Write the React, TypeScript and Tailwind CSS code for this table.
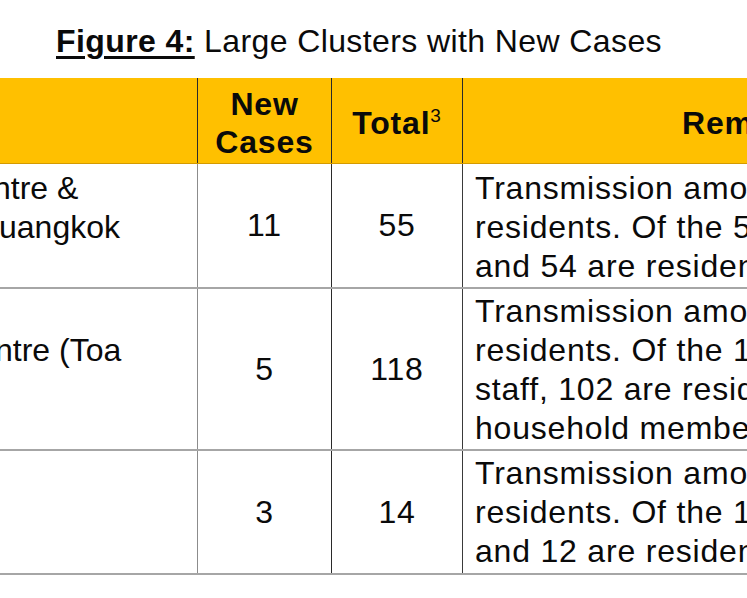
const font = { fontFamily: '"Liberation Sans", Arial, sans-serif' }

// first column is cut at the left edge of the crop, so each line sits a little off-screen
const rows = [
  {
    name: [
      { text: 'ntre &', cls: '-ml-[7px]' },
      { text: 'uangkok', cls: '-ml-[1px]' },
    ],
    newCases: '11',
    total: '55',
    remarks: [
      'Transmission among staff and',
      'residents. Of the 55 cases, 1 is staff',
      'and 54 are residents.',
    ],
    height: 'h-[125px]',
    pad: 'pt-[5px]',
  },
  {
    name: [
      { text: '\u00a0', cls: '' },
      { text: 'ntre (Toa', cls: '-ml-[5px]' },
    ],
    newCases: '5',
    total: '118',
    remarks: [
      'Transmission among staff and',
      'residents. Of the 118 cases, 14 are',
      'staff, 102 are residents and 2 are',
      'household members.',
    ],
    height: 'h-[162px]',
    pad: 'pt-[3px]',
  },
  {
    name: [],
    newCases: '3',
    total: '14',
    remarks: [
      'Transmission among staff and',
      'residents. Of the 14 cases, 2 are staff',
      'and 12 are residents.',
    ],
    height: 'h-[124px]',
    pad: 'pt-[3px]',
  },
]

export default function App() {
  return (
    <div
      className="w-[747px] h-[598px] overflow-hidden bg-white text-[#0a0a0a] text-[32px] leading-[39px]"
      style={font}
    >
      {/* Caption */}
      <div className="pt-[22px] pl-[56px] h-[78px] whitespace-nowrap leading-[38px] tracking-[0.4px]">
        <span className="font-bold underline decoration-[3px] underline-offset-[4px]">Figure 4:</span>
        <span> Large Clusters with New Cases</span>
      </div>

      <div className="w-[1042px] tracking-[0.8px]">
        {/* Header */}
        <div className="flex h-[86px] bg-[#ffc000] border-b border-[#d49a00] font-bold leading-[38px]">
          <div className="w-[197px] shrink-0" />
          <div className="w-[134px] shrink-0 border-l border-[#2a2a2a] flex flex-col items-center justify-center pt-1">
            <span>New</span>
            <span>Cases</span>
          </div>
          <div className="w-[131px] shrink-0 border-l border-[#2a2a2a] flex items-center justify-center pt-1">
            <span>
              Total<sup className="text-[19px] font-normal relative -top-[12px]">3</sup>
            </span>
          </div>
          <div className="w-[580px] shrink-0 border-l border-[#2a2a2a] flex items-center justify-center pt-1">
            Remarks
          </div>
        </div>

        {/* Body */}
        {rows.map((row, i) => (
          <div key={i} className={`flex ${row.height} border-b-2 border-[#a6a6a6]`}>
            <div className={`w-[197px] shrink-0 overflow-hidden ${row.pad} whitespace-nowrap tracking-normal`}>
              {row.name.map((line, j) => (
                <div key={j} className={line.cls}>
                  {line.text}
                </div>
              ))}
            </div>
            <div className="w-[134px] shrink-0 border-l border-[#8c8c8c] flex items-center justify-center">
              {row.newCases}
            </div>
            <div className="w-[131px] shrink-0 border-l border-[#2a2a2a] flex items-center justify-center">
              {row.total}
            </div>
            <div className={`w-[580px] shrink-0 border-l border-[#3a3a3a] pl-[12px] ${row.pad} whitespace-nowrap`}>
              {row.remarks.map((line, j) => (
                <div key={j}>{line}</div>
              ))}
            </div>
          </div>
        ))}
      </div>
    </div>
  )
}
